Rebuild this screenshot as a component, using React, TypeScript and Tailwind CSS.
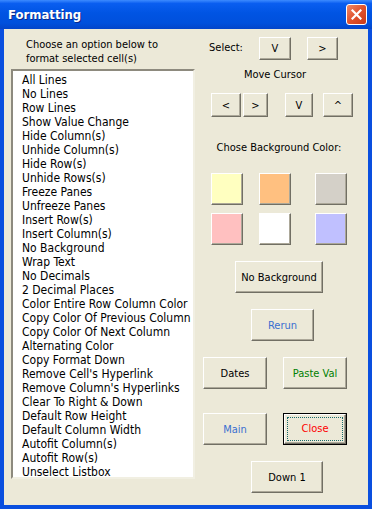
import React from "react";

const items = [
  "All Lines",
  "No Lines",
  "Row Lines",
  "Show Value Change",
  "Hide Column(s)",
  "Unhide Column(s)",
  "Hide Row(s)",
  "Unhide Rows(s)",
  "Freeze Panes",
  "Unfreeze Panes",
  "Insert Row(s)",
  "Insert Column(s)",
  "No Background",
  "Wrap Text",
  "No Decimals",
  "2 Decimal Places",
  "Color Entire Row Column Color",
  "Copy Color Of Previous Column",
  "Copy Color Of Next Column",
  "Alternating Color",
  "Copy Format Down",
  "Remove Cell's Hyperlink",
  "Remove Column's Hyperlinks",
  "Clear To Right & Down",
  "Default Row Height",
  "Default Column Width",
  "Autofit Column(s)",
  "Autofit Row(s)",
  "Unselect Listbox",
];

// raised 3D look used by all the form buttons and colour swatches
const raised =
  "border border-t-white border-l-white border-r-[#716f64] border-b-[#716f64] shadow-[inset_-1px_-1px_0_#aca899]";

function Btn({
  className,
  children,
}: {
  className: string;
  children: React.ReactNode;
}) {
  return (
    <button
      className={`${raised} bg-[#ece9d8] flex items-center justify-center text-[11px] leading-none ${className}`}
    >
      {children}
    </button>
  );
}

function Swatch({ className }: { className: string }) {
  return <div className={`${raised} w-[32px] h-[32px] ${className}`} />;
}

export default function App() {
  return (
    <div
      className="w-[372px] h-[509px] bg-[#0a4fdf] flex flex-col text-black"
      style={{ fontFamily: '"DejaVu Sans Condensed", "Liberation Sans", sans-serif' }}
    >
      {/* title bar */}
      <div className="h-[29px] shrink-0 flex items-center justify-between pl-[8px] pr-[5px] bg-[linear-gradient(to_bottom,#3d8bff_0%,#0a5ef0_12%,#0054e3_45%,#0050dc_80%,#0345c9_100%)]">
        <span className="text-white font-bold text-[13px] [text-shadow:1px_1px_0_#0a2a8a]">
          Formatting
        </span>
        <div className="w-[21px] h-[21px] rounded-[3px] border border-white bg-[linear-gradient(135deg,#f08a68_0%,#e0522d_50%,#c93a17_100%)] flex items-center justify-center">
          <svg width="11" height="11" viewBox="0 0 11 11">
            <path
              d="M1.5 1.5 L9.5 9.5 M9.5 1.5 L1.5 9.5"
              stroke="white"
              strokeWidth="2.2"
              strokeLinecap="square"
            />
          </svg>
        </div>
      </div>

      {/* client area */}
      <div className="flex-1 mx-[4px] mb-[4px] bg-[#ece9d8] flex">
        {/* left column */}
        <div className="w-[191px] shrink-0 pl-[7px] flex flex-col">
          <p className="pl-[15px] pt-[9px] text-[11px] leading-[14px] h-[40px]">
            Choose an option below to
            <br />
            format selected cell(s)
          </p>
          <div className="w-[184px] h-[410px] bg-white border-2 border-t-[#8d8a7e] border-l-[#8d8a7e] border-r-[#f1efe2] border-b-[#f1efe2] pl-[9px] pt-[2px] overflow-hidden">
            {items.map((it) => (
              <div key={it} className="text-[12px] leading-[14px] whitespace-nowrap">
                {it}
              </div>
            ))}
          </div>
        </div>

        {/* right column */}
        <div className="flex-1 flex flex-col pt-[8px] text-[11px]">
          <div className="flex items-center h-[23px]">
            <span className="ml-[14px] w-[50px]">Select:</span>
            <Btn className="w-[32px] h-[23px]">V</Btn>
            <Btn className="w-[31px] h-[23px] ml-[16px]">&gt;</Btn>
          </div>

          <div className="mt-[8px] h-[14px] leading-[14px] w-[160px] text-center">
            Move Cursor
          </div>

          <div className="flex mt-[11px] h-[24px]">
            <Btn className="w-[30px] h-[24px] ml-[16px]">&lt;</Btn>
            <Btn className="w-[25px] h-[24px] ml-[2px]">&gt;</Btn>
            <Btn className="w-[28px] h-[24px] ml-[17px]">V</Btn>
            <Btn className="w-[30px] h-[24px] ml-[10px]">^</Btn>
          </div>

          <div className="mt-[24px] h-[14px] leading-[14px] w-[168px] text-center">
            Chose Background Color:
          </div>

          <div className="flex mt-[18px]">
            <Swatch className="ml-[16px] bg-[#ffffc0]" />
            <Swatch className="ml-[16px] bg-[#ffc080]" />
            <Swatch className="ml-[24px] bg-[#d4d0c8]" />
          </div>
          <div className="flex mt-[8px]">
            <Swatch className="ml-[16px] bg-[#ffc0c0]" />
            <Swatch className="ml-[16px] bg-white" />
            <Swatch className="ml-[24px] bg-[#c0c0ff]" />
          </div>

          <div className="flex mt-[16px]">
            <Btn className="w-[88px] h-[32px] ml-[40px]">No Background</Btn>
          </div>

          <div className="flex mt-[16px]">
            <Btn className="w-[63px] h-[32px] ml-[56px] text-[#3a6fd0]">Rerun</Btn>
          </div>

          <div className="flex mt-[16px]">
            <Btn className="w-[64px] h-[32px] ml-[8px]">Dates</Btn>
            <Btn className="w-[64px] h-[32px] ml-[16px] text-[#008000]">Paste Val</Btn>
          </div>

          <div className="flex mt-[24px]">
            <Btn className="w-[64px] h-[32px] ml-[8px] text-[#3a6fd0]">Main</Btn>
            <div className="w-[64px] h-[32px] ml-[16px] border border-black">
              <div className={`${raised} w-full h-full bg-[#ece9d8] p-[2px]`}>
                <div className="w-full h-full border border-dotted border-[#1a6a6a] flex items-center justify-center text-[11px] text-[#ff0000]">
                  Close
                </div>
              </div>
            </div>
          </div>

          <div className="flex mt-[16px]">
            <Btn className="w-[72px] h-[32px] ml-[56px]">Down 1</Btn>
          </div>
        </div>
      </div>
    </div>
  );
}
